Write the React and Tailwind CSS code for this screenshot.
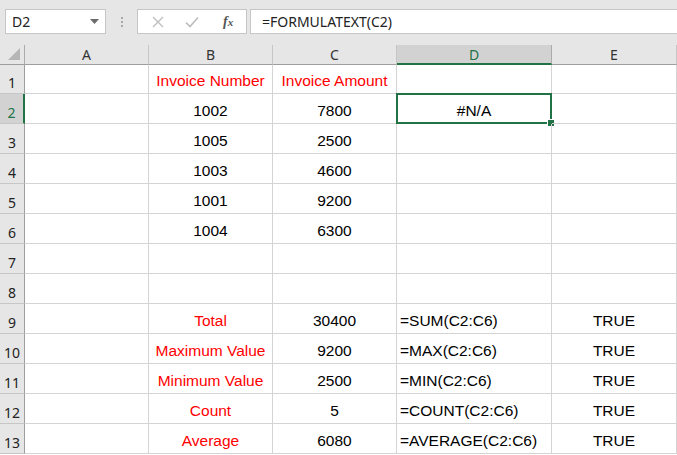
import React from "react";

const cols = [
  { id: "A", w: "w-[124px]" },
  { id: "B", w: "w-[124px]" },
  { id: "C", w: "w-[124px]" },
  { id: "D", w: "w-[155px]" },
  { id: "E", w: "w-[125px]" },
];

const R = "text-[#ff0000]";
const rows = [
  { n: 1, h: "h-[29px]", cells: ["", ["Invoice Number", "c", R], ["Invoice Amount", "c", R], "", ""] },
  { n: 2, cells: ["", ["1002", "c"], ["7800", "c"], ["#N/A", "c"], ""] },
  { n: 3, cells: ["", ["1005", "c"], ["2500", "c"], "", ""] },
  { n: 4, cells: ["", ["1003", "c"], ["4600", "c"], "", ""] },
  { n: 5, cells: ["", ["1001", "c"], ["9200", "c"], "", ""] },
  { n: 6, cells: ["", ["1004", "c"], ["6300", "c"], "", ""] },
  { n: 7, cells: ["", "", "", "", ""] },
  { n: 8, cells: ["", "", "", "", ""] },
  { n: 9, cells: ["", ["Total", "c", R], ["30400", "c"], ["=SUM(C2:C6)", "l"], ["TRUE", "c"]] },
  { n: 10, cells: ["", ["Maximum Value", "c", R], ["9200", "c"], ["=MAX(C2:C6)", "l"], ["TRUE", "c"]] },
  { n: 11, cells: ["", ["Minimum Value", "c", R], ["2500", "c"], ["=MIN(C2:C6)", "l"], ["TRUE", "c"]] },
  { n: 12, cells: ["", ["Count", "c", R], ["5", "c"], ["=COUNT(C2:C6)", "l"], ["TRUE", "c"]] },
  { n: 13, cells: ["", ["Average", "c", R], ["6080", "c"], ["=AVERAGE(C2:C6)", "l"], ["TRUE", "c"]] },
];

const ui = { fontFamily: '"Noto Sans", "Open Sans", "DejaVu Sans", sans-serif' };
const cellFont = { fontFamily: '"Liberation Sans", Arial, sans-serif' };

export default function App() {
  return (
    <div className="w-[677px] h-[455px] overflow-hidden bg-white relative">
      {/* formula bar */}
      <div className="h-[45px] bg-[#e6e6e6] flex items-start pt-[9px]" style={ui}>
        <div className="ml-[5px] w-[101px] h-[25px] bg-white border border-[#c6c6c6] flex items-center justify-between pl-[6px] pr-[6px]">
          <span className="text-[14px] text-[#222] leading-none">D2</span>
          <svg width="9" height="5" viewBox="0 0 9 5"><path d="M0 0 H9 L4.5 5 Z" fill="#6b6b6b" /></svg>
        </div>
        <div className="w-[31px] h-[25px] flex flex-col items-center justify-center gap-[2px]">
          <span className="w-[2px] h-[2px] bg-[#a8a8a8]" />
          <span className="w-[2px] h-[2px] bg-[#a8a8a8]" />
          <span className="w-[2px] h-[2px] bg-[#a8a8a8]" />
        </div>
        <div className="w-[110px] h-[25px] bg-white border border-[#c6c6c6] flex items-center">
          <svg className="ml-[14px]" width="12" height="12" viewBox="0 0 12 12"><path d="M1 1 L11 11 M11 1 L1 11" stroke="#bdbdbd" strokeWidth="1.3" /></svg>
          <svg className="ml-[21px]" width="14" height="12" viewBox="0 0 14 12"><path d="M1 6.5 L5 10.5 L13 1.5" stroke="#bdbdbd" strokeWidth="1.6" fill="none" /></svg>
          <span className="ml-[24px] text-[14px] text-[#555] italic font-bold leading-none" style={{ fontFamily: '"Liberation Serif", serif' }}>f<span className="text-[11px]">x</span></span>
        </div>
        <div className="ml-[3px] flex-1 h-[25px] bg-white border-y border-l border-[#c6c6c6] flex items-center pl-[11px]">
          <span className="text-[14px] text-[#222] leading-none">=FORMULATEXT(C2)</span>
        </div>
      </div>

      {/* column header */}
      <div className="flex h-[20px] bg-[#e6e6e6]" style={ui}>
        <div className="w-[25px] h-full border-r border-[#ababab] border-b border-b-[#9e9e9e] relative">
          <svg className="absolute right-[4px] bottom-[4px]" width="12" height="12" viewBox="0 0 12 12"><path d="M12 0 V12 H0 Z" fill="#b5b5b5" /></svg>
        </div>
        {cols.map((c) =>
          c.id === "D" ? (
            <div key={c.id} className={`${c.w} h-full bg-[#d2d2d2] border-r border-[#ababab] border-b-2 border-b-[#217346] flex items-center justify-center text-[14px] text-[#217346]`}>
              {c.id}
            </div>
          ) : (
            <div key={c.id} className={`${c.w} h-full border-r border-[#c6c6c6] border-b border-b-[#9e9e9e] flex items-center justify-center text-[14px] text-[#333]`}>
              {c.id}
            </div>
          )
        )}
      </div>

      {/* rows */}
      {rows.map((r) => (
        <div key={r.n} className={`flex ${r.h || "h-[30px]"}`}>
          {r.n === 2 ? (
            <div className="w-[25px] h-full bg-[#d2d2d2] border-r-2 border-[#217346] border-b border-b-[#c6c6c6] flex items-end justify-center pb-0 text-[14px] leading-[20px] text-[#217346]" style={ui}>
              {r.n}
            </div>
          ) : (
            <div className="w-[25px] h-full bg-[#e6e6e6] border-r border-[#9e9e9e] border-b border-b-[#c6c6c6] flex items-end justify-center pb-0 text-[14px] leading-[20px] text-[#222]" style={ui}>
              {r.n}
            </div>
          )}
          {cols.map((c, i) => {
            const v = r.cells[i];
            const txt = v ? v[0] : "";
            const align = v && v[1] === "l" ? "justify-start pl-[3px]" : "justify-center";
            const color = v && v[2] ? v[2] : "text-black";
            const sel = r.n === 2 && c.id === "D";
            return (
              <div key={c.id} className={`${c.w} h-full border-r border-b border-[#d4d4d4] flex items-center pt-[4px] ${align} relative text-[15.5px] ${color}`} style={cellFont}>
                {txt}
                {sel && (
                  <>
                    <div className="absolute left-[-1px] top-[-1px] right-[-1px] bottom-[-1px] border-2 border-[#217346]" />
                    <div className="absolute right-[-4px] bottom-[-4px] w-[6px] h-[6px] bg-[#217346] border border-white box-content" />
                  </>
                )}
              </div>
            );
          })}
        </div>
      ))}
    </div>
  );
}
